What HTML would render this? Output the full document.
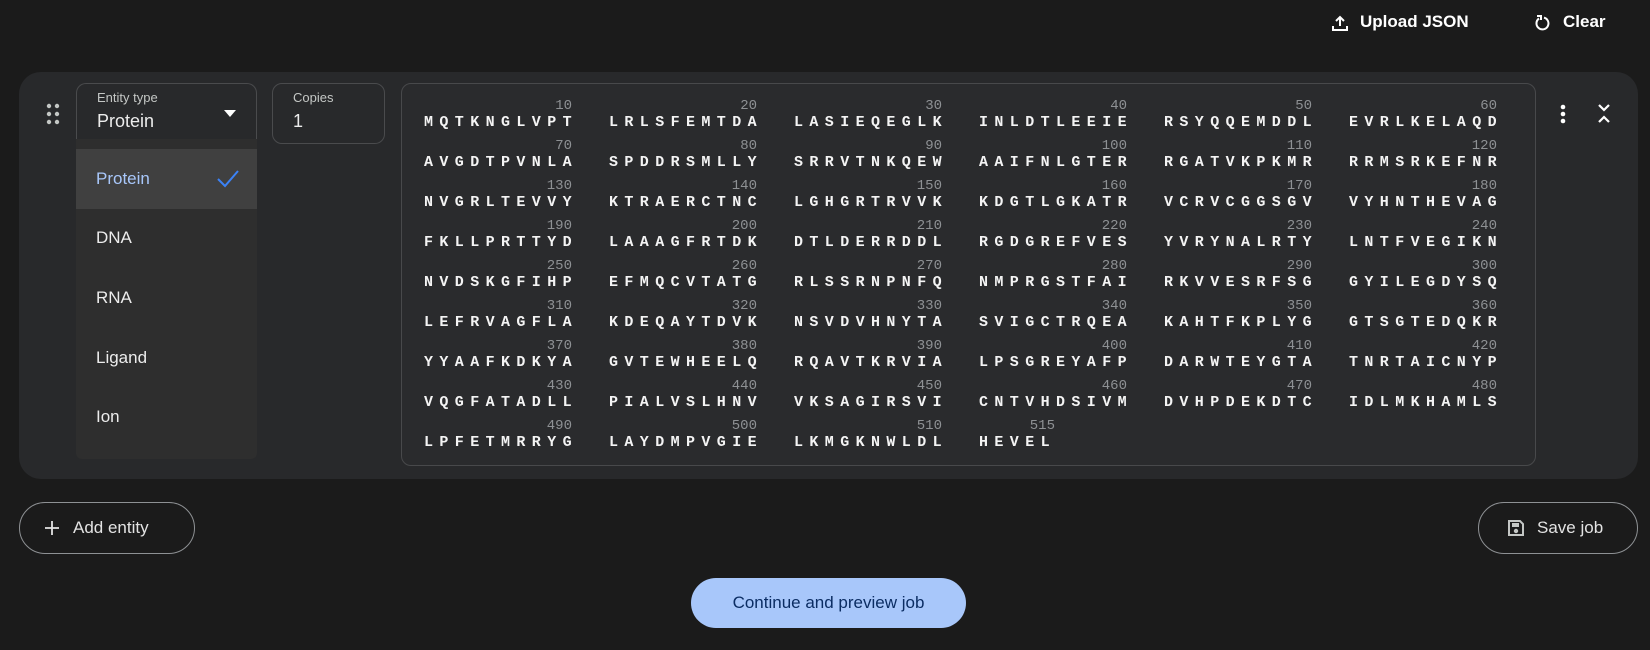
<!DOCTYPE html>
<html><head><meta charset="utf-8"><style>
*{box-sizing:border-box;margin:0;padding:0}
body{width:1650px;height:650px;background:#1b1b1b;font-family:"Liberation Sans",sans-serif;color:#e3e3e3;position:relative;overflow:hidden}
.abs{position:absolute}
.card{left:19px;top:72px;width:1619px;height:407px;background:#28292b;border-radius:22px}
.field{border:1px solid #4a4b4d;border-radius:10px;background:#28292b}
.lbl{font-size:13px;color:#c4c7c5}
.val{font-size:18px;color:#ececec}
.menu{left:76px;top:139px;width:181px;height:320px;background:#2e2e2e;border-radius:0 0 6px 6px}
.mi{position:absolute;left:20px;font-size:17px;color:#ececec}
.seq{left:401px;top:83px;width:1135px;height:383px;border:1px solid #48494b;border-radius:10px;background:#2a2b2d}
.row{position:absolute;left:22px;height:40px}
.g{position:absolute;top:0;width:160px}
.n{position:absolute;right:12px;top:8px;font-family:"Liberation Mono",monospace;font-size:14px;color:#8e9194}
.s{position:absolute;left:0;top:24px;font-family:"Liberation Mono",monospace;font-weight:bold;font-size:15px;letter-spacing:6.4px;color:#f4f4f4;white-space:nowrap}
.btn{border:1px solid #8e9194;border-radius:26px;font-size:17px;color:#e3e3e3;display:flex;align-items:center}
</style></head><body>
<!-- top -->
<svg class="abs" style="left:1331px;top:14px" width="18" height="18" viewBox="0 0 18 18"><path d="M9 12V3M5 7l4-4 4 4M2 12v4h14v-4" fill="none" stroke="#fff" stroke-width="2"/></svg>
<div class="abs" style="left:1360px;top:12px;font-size:17px;color:#fff;font-weight:bold">Upload JSON</div>
<svg class="abs" style="left:1533px;top:14px" width="18" height="18" viewBox="0 0 18 18"><path d="M6 4.5A6 6 0 1 0 11 3.6" fill="none" stroke="#fff" stroke-width="2"/><path d="M4 2h4v4" fill="none" stroke="#fff" stroke-width="2"/></svg>
<div class="abs" style="left:1563px;top:12px;font-size:17px;color:#fff;font-weight:bold">Clear</div>

<div class="abs card"></div>
<svg class="abs" style="left:46px;top:103px" width="14" height="22" viewBox="0 0 14 22"><g fill="#c4c7c5"><circle cx="3" cy="3" r="2.2"/><circle cx="11" cy="3" r="2.2"/><circle cx="3" cy="11" r="2.2"/><circle cx="11" cy="11" r="2.2"/><circle cx="3" cy="19" r="2.2"/><circle cx="11" cy="19" r="2.2"/></g></svg>
<div class="abs field" style="left:76px;top:83px;width:181px;height:70px;border-bottom:none;border-radius:10px 10px 0 0"></div>
<div class="abs lbl" style="left:97px;top:90px">Entity type</div>
<div class="abs val" style="left:97px;top:111px">Protein</div>
<svg class="abs" style="left:224px;top:110px" width="12" height="7"><path d="M0 0h12L6 7z" fill="#fff"/></svg>
<div class="abs field" style="left:272px;top:83px;width:113px;height:61px"></div>
<div class="abs lbl" style="left:293px;top:90px">Copies</div>
<div class="abs val" style="left:293px;top:111px">1</div>

<div class="abs menu">
<div class="abs" style="left:0;top:10px;width:181px;height:60px;background:#404040"></div>
<div class="mi" style="top:30px;color:#a8c7fa">Protein</div>
<svg class="abs" style="left:140px;top:30px" width="24" height="20"><path d="M2 10l7 7L22 2" fill="none" stroke="#3b82f6" stroke-width="2"/></svg>
<div class="mi" style="top:89px">DNA</div>
<div class="mi" style="top:149px">RNA</div>
<div class="mi" style="top:209px">Ligand</div>
<div class="mi" style="top:268px">Ion</div>
</div>

<div class="abs seq">
<div class="row" style="top:6px"><div class="g" style="left:0"><span class="n">10</span><span class="s">MQTKNGLVPT</span></div><div class="g" style="left:185px"><span class="n">20</span><span class="s">LRLSFEMTDA</span></div><div class="g" style="left:370px"><span class="n">30</span><span class="s">LASIEQEGLK</span></div><div class="g" style="left:555px"><span class="n">40</span><span class="s">INLDTLEEIE</span></div><div class="g" style="left:740px"><span class="n">50</span><span class="s">RSYQQEMDDL</span></div><div class="g" style="left:925px"><span class="n">60</span><span class="s">EVRLKELAQD</span></div></div>
<div class="row" style="top:46px"><div class="g" style="left:0"><span class="n">70</span><span class="s">AVGDTPVNLA</span></div><div class="g" style="left:185px"><span class="n">80</span><span class="s">SPDDRSMLLY</span></div><div class="g" style="left:370px"><span class="n">90</span><span class="s">SRRVTNKQEW</span></div><div class="g" style="left:555px"><span class="n">100</span><span class="s">AAIFNLGTER</span></div><div class="g" style="left:740px"><span class="n">110</span><span class="s">RGATVKPKMR</span></div><div class="g" style="left:925px"><span class="n">120</span><span class="s">RRMSRKEFNR</span></div></div>
<div class="row" style="top:86px"><div class="g" style="left:0"><span class="n">130</span><span class="s">NVGRLTEVVY</span></div><div class="g" style="left:185px"><span class="n">140</span><span class="s">KTRAERCTNC</span></div><div class="g" style="left:370px"><span class="n">150</span><span class="s">LGHGRTRVVK</span></div><div class="g" style="left:555px"><span class="n">160</span><span class="s">KDGTLGKATR</span></div><div class="g" style="left:740px"><span class="n">170</span><span class="s">VCRVCGGSGV</span></div><div class="g" style="left:925px"><span class="n">180</span><span class="s">VYHNTHEVAG</span></div></div>
<div class="row" style="top:126px"><div class="g" style="left:0"><span class="n">190</span><span class="s">FKLLPRTTYD</span></div><div class="g" style="left:185px"><span class="n">200</span><span class="s">LAAAGFRTDK</span></div><div class="g" style="left:370px"><span class="n">210</span><span class="s">DTLDERRDDL</span></div><div class="g" style="left:555px"><span class="n">220</span><span class="s">RGDGREFVES</span></div><div class="g" style="left:740px"><span class="n">230</span><span class="s">YVRYNALRTY</span></div><div class="g" style="left:925px"><span class="n">240</span><span class="s">LNTFVEGIKN</span></div></div>
<div class="row" style="top:166px"><div class="g" style="left:0"><span class="n">250</span><span class="s">NVDSKGFIHP</span></div><div class="g" style="left:185px"><span class="n">260</span><span class="s">EFMQCVTATG</span></div><div class="g" style="left:370px"><span class="n">270</span><span class="s">RLSSRNPNFQ</span></div><div class="g" style="left:555px"><span class="n">280</span><span class="s">NMPRGSTFAI</span></div><div class="g" style="left:740px"><span class="n">290</span><span class="s">RKVVESRFSG</span></div><div class="g" style="left:925px"><span class="n">300</span><span class="s">GYILEGDYSQ</span></div></div>
<div class="row" style="top:206px"><div class="g" style="left:0"><span class="n">310</span><span class="s">LEFRVAGFLA</span></div><div class="g" style="left:185px"><span class="n">320</span><span class="s">KDEQAYTDVK</span></div><div class="g" style="left:370px"><span class="n">330</span><span class="s">NSVDVHNYTA</span></div><div class="g" style="left:555px"><span class="n">340</span><span class="s">SVIGCTRQEA</span></div><div class="g" style="left:740px"><span class="n">350</span><span class="s">KAHTFKPLYG</span></div><div class="g" style="left:925px"><span class="n">360</span><span class="s">GTSGTEDQKR</span></div></div>
<div class="row" style="top:246px"><div class="g" style="left:0"><span class="n">370</span><span class="s">YYAAFKDKYA</span></div><div class="g" style="left:185px"><span class="n">380</span><span class="s">GVTEWHEELQ</span></div><div class="g" style="left:370px"><span class="n">390</span><span class="s">RQAVTKRVIA</span></div><div class="g" style="left:555px"><span class="n">400</span><span class="s">LPSGREYAFP</span></div><div class="g" style="left:740px"><span class="n">410</span><span class="s">DARWTEYGTA</span></div><div class="g" style="left:925px"><span class="n">420</span><span class="s">TNRTAICNYP</span></div></div>
<div class="row" style="top:286px"><div class="g" style="left:0"><span class="n">430</span><span class="s">VQGFATADLL</span></div><div class="g" style="left:185px"><span class="n">440</span><span class="s">PIALVSLHNV</span></div><div class="g" style="left:370px"><span class="n">450</span><span class="s">VKSAGIRSVI</span></div><div class="g" style="left:555px"><span class="n">460</span><span class="s">CNTVHDSIVM</span></div><div class="g" style="left:740px"><span class="n">470</span><span class="s">DVHPDEKDTC</span></div><div class="g" style="left:925px"><span class="n">480</span><span class="s">IDLMKHAMLS</span></div></div>
<div class="row" style="top:326px"><div class="g" style="left:0"><span class="n">490</span><span class="s">LPFETMRRYG</span></div><div class="g" style="left:185px"><span class="n">500</span><span class="s">LAYDMPVGIE</span></div><div class="g" style="left:370px"><span class="n">510</span><span class="s">LKMGKNWLDL</span></div><div class="g" style="left:555px;width:76px"><span class="n" style="right:0">515</span><span class="s">HEVEL</span></div></div>
</div>

<svg class="abs" style="left:1559px;top:104px" width="8" height="20"><g fill="#fff"><circle cx="4" cy="3" r="2.3"/><circle cx="4" cy="10" r="2.3"/><circle cx="4" cy="17" r="2.3"/></g></svg>
<svg class="abs" style="left:1597px;top:102px" width="14" height="22"><path d="M2 3l5 5 5-5M2 20l5-5 5 5" fill="none" stroke="#fff" stroke-width="2.2"/></svg>

<div class="abs btn" style="left:19px;top:502px;width:176px;height:52px;padding-left:25px">
<svg width="14" height="14" style="margin-right:14px"><path d="M7 0v14M0 7h14" stroke="#e3e3e3" stroke-width="1.8"/></svg>Add entity</div>
<div class="abs btn" style="left:1478px;top:502px;width:160px;height:52px;padding-left:28px">
<svg width="18" height="18" style="margin-right:12px" viewBox="0 0 18 18"><path d="M2 2h11l3 3v11H2z" fill="none" stroke="#c4c7c5" stroke-width="2"/><rect x="5" y="4" width="7" height="4" fill="#c4c7c5"/><circle cx="9" cy="12" r="2.2" fill="#c4c7c5"/></svg>Save job</div>
<div class="abs" style="left:691px;top:578px;width:275px;height:50px;border-radius:25px;background:#a8c7fa;color:#0b2d63;font-size:17px;display:flex;align-items:center;justify-content:center">Continue and preview job</div>
</body></html>
